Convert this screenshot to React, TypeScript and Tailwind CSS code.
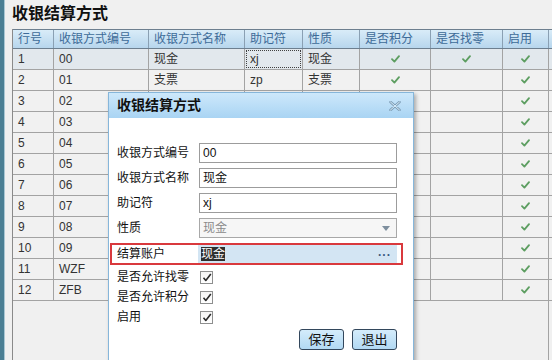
import React from 'react'

const cols = [
  { key: 'no', label: '行号', w: 'w-[41px]' },
  { key: 'code', label: '收银方式编号', w: 'w-[95px]' },
  { key: 'name', label: '收银方式名称', w: 'w-[96px]' },
  { key: 'abbr', label: '助记符', w: 'w-[58px]' },
  { key: 'kind', label: '性质', w: 'w-[57px]' },
  { key: 'points', label: '是否积分', w: 'w-[71px]' },
  { key: 'change', label: '是否找零', w: 'w-[72px]' },
  { key: 'on', label: '启用', w: 'w-[46px]' },
]

type Row = {
  no: string
  code: string
  name?: string
  abbr?: string
  kind?: string
  points?: boolean
  change?: boolean
  on: boolean
}

const rows: Row[] = [
  { no: '1', code: '00', name: '现金', abbr: 'xj', kind: '现金', points: true, change: true, on: true },
  { no: '2', code: '01', name: '支票', abbr: 'zp', kind: '支票', points: true, on: true },
  { no: '3', code: '02', on: true },
  { no: '4', code: '03', on: true },
  { no: '5', code: '04', on: true },
  { no: '6', code: '05', on: true },
  { no: '7', code: '06', on: true },
  { no: '8', code: '07', on: true },
  { no: '9', code: '08', on: true },
  { no: '10', code: '09', on: true },
  { no: '11', code: 'WZF', on: true },
  { no: '12', code: 'ZFB', on: true },
]

function Tick() {
  return (
    <svg width="9" height="8" viewBox="0 0 9 8">
      <path d="M1 4.2 L3.4 6.6 L8 1.2" fill="none" stroke="#5d9e61" strokeWidth="1.8" strokeLinecap="round" strokeLinejoin="round" />
    </svg>
  )
}

function BoxCheck() {
  return (
    <div className="w-[13px] h-[13px] border border-[#8e8f8f] bg-gradient-to-b from-[#f4f4f4] to-[#ffffff] flex items-center justify-center">
      <svg width="10" height="9" viewBox="0 0 10 9">
        <path d="M1.5 4.8 L3.8 7.5 L8.8 1" fill="none" stroke="#2a2a2a" strokeWidth="1.6" strokeLinejoin="round" />
      </svg>
    </div>
  )
}

function Cell({ w, center, children, focus }: { w: string; center?: boolean; children?: React.ReactNode; focus?: boolean }) {
  return (
    <div className={`${w} shrink-0 h-full border-r border-[#a3a3a3] flex items-center ${center ? 'justify-center' : 'px-[5px]'} relative`}>
      {focus && <div className="absolute inset-[1px] border border-dotted border-[#404040]" />}
      {children}
    </div>
  )
}

function Field({ label, children }: { label: string; children: React.ReactNode }) {
  return (
    <div className="flex items-center h-[20px]">
      <div className="w-[82px] shrink-0">{label}</div>
      {children}
    </div>
  )
}

function CheckRow({ label }: { label: string }) {
  return (
    <div className="flex items-center h-[20px]">
      <div className="w-[83px] shrink-0">{label}</div>
      <BoxCheck />
    </div>
  )
}

export default function App() {
  return (
    <div className="relative w-[552px] h-[360px] overflow-hidden bg-[#f0f0f0] flex font-[family-name:'Liberation_Sans','Noto_Sans_CJK_SC',sans-serif] text-[12px] text-[#333]">
      {/* left window edge */}
      <div className="w-[4px] shrink-0 bg-[#4b7f94]" />
      <div className="w-[1px] shrink-0 bg-[#a9c7d4]" />

      <div className="flex-1 flex flex-col pl-[7px]">
        <div className="h-[29px] shrink-0 flex items-center text-[16px] font-bold text-[#111] pb-[2px]">收银结算方式</div>

        <div className="flex-1 border-l border-[#8a8a8a] flex flex-col">
          {/* header */}
          <div className="flex h-[20px] shrink-0 border-t border-b border-[#6d7f8f] bg-gradient-to-b from-[#d9ecf8] to-[#b7d6ed] text-[#3d6b98]">
            {cols.map(c => (
              <div key={c.key} className={`${c.w} shrink-0 h-full border-r border-[#8aa0b3] flex items-center px-[5px]`}>
                {c.label}
              </div>
            ))}
            <div className="flex-1" />
          </div>

          {rows.map((r, i) => (
            <div key={r.no} className={`flex h-[21px] shrink-0 border-b border-[#a3a3a3] ${i === 0 ? 'bg-[#e2e8ed]' : 'bg-[#f1f1f1]'}`}>
              <Cell w="w-[41px]">{r.no}</Cell>
              <Cell w="w-[95px]">{r.code}</Cell>
              <Cell w="w-[96px]">{r.name}</Cell>
              <Cell w="w-[58px]" focus={i === 0}>{r.abbr}</Cell>
              <Cell w="w-[57px]">{r.kind}</Cell>
              <Cell w="w-[71px]" center>{r.points && <Tick />}</Cell>
              <Cell w="w-[72px]" center>{r.change && <Tick />}</Cell>
              <Cell w="w-[46px]" center>{r.on && <Tick />}</Cell>
              <div className="flex-1" />
            </div>
          ))}
          <div className="flex-1 flex">
            <div className="w-[536px] shrink-0 border-r border-[#a3a3a3]" />
          </div>
        </div>
      </div>

      {/* dialog */}
      <div className="absolute left-[108px] top-[92px] w-[306px] h-[280px] bg-white border border-[#86b6da] shadow-[2px_2px_4px_rgba(0,0,0,0.3)] flex flex-col text-[#111]">
        <div className="h-[25px] shrink-0 bg-gradient-to-b from-[#cde8fb] to-[#a9d4f3] flex items-center justify-between pl-[8px] pr-[12px]">
          <span className="text-[14px] font-bold">收银结算方式</span>
          <svg width="12" height="10" viewBox="0 0 12 10">
            <path d="M1.5 1 L10.5 9 M10.5 1 L1.5 9" stroke="#7f9fb8" strokeWidth="2.6" strokeLinecap="round" />
            <path d="M1.5 1 L10.5 9 M10.5 1 L1.5 9" stroke="#d8ebf8" strokeWidth="1" strokeLinecap="round" />
          </svg>
        </div>

        <div className="flex flex-col pl-[8px] pt-[25px] gap-[5px]">
          <Field label="收银方式编号">
            <div className="w-[198px] h-[20px] border border-[#9c9c9c] bg-white flex items-center px-[3px]">00</div>
          </Field>
          <Field label="收银方式名称">
            <div className="w-[198px] h-[20px] border border-[#9c9c9c] bg-white flex items-center px-[3px]">现金</div>
          </Field>
          <Field label="助记符">
            <div className="w-[198px] h-[20px] border border-[#9c9c9c] bg-white flex items-center px-[3px]">xj</div>
          </Field>
          <Field label="性质">
            <div className="w-[198px] h-[20px] border border-[#a8a8a8] bg-[#f6f6f6] flex items-center justify-between px-[3px] text-[#8a8a8a]">
              <span>现金</span>
              <svg width="8" height="5" viewBox="0 0 8 5" className="mr-[3px]">
                <path d="M0 0 L8 0 L4 5 Z" fill="#7e8f9e" />
              </svg>
            </div>
          </Field>

          <div className="-ml-[7px] w-[293px] h-[22px] border-2 border-[#d9393d] flex items-center pl-[5px]">
            <div className="w-[81px] shrink-0">结算账户</div>
            <div className="w-[199px] h-[18px] bg-[#d3e5f3] flex items-center justify-between pl-[3px] pr-[6px]">
              <span className="bg-[#2f2f2f] text-white leading-[14px]">现金</span>
              <span className="text-[#3d5a80] font-bold tracking-[1px] leading-none pb-[4px]">...</span>
            </div>
          </div>

          <div className="flex flex-col -mt-[3px]">
            <CheckRow label="是否允许找零" />
            <CheckRow label="是否允许积分" />
            <CheckRow label="启用" />
          </div>

          <div className="flex justify-end gap-[8px] w-[280px] mt-[-3px]">
            <button className="w-[45px] h-[21px] rounded-[3px] border border-[#33475c] bg-gradient-to-b from-[#d4ecfb] to-[#b2d9f3] text-[13px] text-[#111] flex items-center justify-center">保存</button>
            <button className="w-[45px] h-[21px] rounded-[3px] border border-[#33475c] bg-gradient-to-b from-[#d4ecfb] to-[#b2d9f3] text-[13px] text-[#111] flex items-center justify-center">退出</button>
          </div>
        </div>
      </div>
    </div>
  )
}
